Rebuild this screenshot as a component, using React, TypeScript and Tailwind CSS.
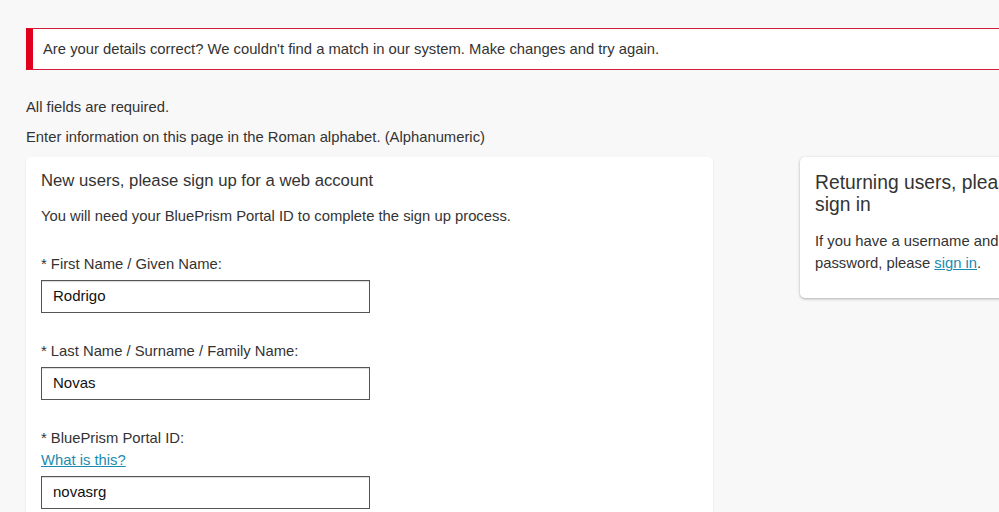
import React from "react";

function Field({ label, value, link }: { label: string; value: string; link?: string }) {
  return (
    <div className="flex flex-col">
      <div className="text-[14.8px] leading-[18px] text-[#333]">{label}</div>
      {link && (
        <a href="#" className="text-[14.8px] leading-[18px] text-[#1b8bb0] underline mt-[4px] self-start">
          {link}
        </a>
      )}
      <div className="mt-[7px] w-[329px] h-[33px] border border-[#555] shadow-[inset_0_1px_1px_rgba(0,0,0,0.15)] bg-white flex items-center pl-[11px] text-[15px] text-[#111]">
        {value}
      </div>
    </div>
  );
}

export default function App() {
  return (
    <div
      className="w-[999px] h-[512px] overflow-hidden bg-[#f8f8f8] text-[#333]"
      style={{ fontFamily: '"Liberation Sans", Arial, sans-serif' }}
    >
      <div className="pl-[26px] pt-[28px] w-[1200px]">
        <div className="w-[1100px] h-[42px] bg-white border-y border-[#d71a3a] border-l-[7px] border-l-[#e0001b] flex items-center pl-[10px] text-[14.8px] text-[#333]">
          Are your details correct? We couldn't find a match in our system. Make changes and try again.
        </div>
        <div className="mt-[28px] text-[14.8px] leading-[18px]">All fields are required.</div>
        <div className="mt-[12px] text-[14.8px] leading-[18px]">
          Enter information on this page in the Roman alphabet. (Alphanumeric)
        </div>
        <div className="mt-[11px] flex items-start gap-[87px]">
          <div className="w-[687px] h-[400px] bg-white rounded-[5px] shadow-[0_1px_2px_rgba(0,0,0,0.12)] pl-[15px] pt-[14px]">
            <div className="text-[16.7px] leading-[20px] text-[#333]">New users, please sign up for a web account</div>
            <div className="mt-[16px] text-[14.8px] leading-[18px]">
              You will need your BluePrism Portal ID to complete the sign up process.
            </div>
            <div className="mt-[30px] flex flex-col gap-[29px]">
              <Field label="* First Name / Given Name:" value="Rodrigo" />
              <Field label="* Last Name / Surname / Family Name:" value="Novas" />
              <Field label="* BluePrism Portal ID:" value="novasrg" link="What is this?" />
            </div>
          </div>
          <div className="w-[300px] bg-white rounded-[5px] shadow-[0_1px_3px_rgba(0,0,0,0.3)] pl-[15px] pt-[15px] pb-[24px]">
            <div className="text-[19.3px] leading-[22px] text-[#333] whitespace-nowrap">
              Returning users, please
              <br />
              sign in
            </div>
            <div className="mt-[14px] text-[14.8px] leading-[22px] whitespace-nowrap">
              If you have a username and
              <br />
              password, please{" "}
              <a href="#" className="text-[#1b8bb0] underline">
                sign in
              </a>
              .
            </div>
          </div>
        </div>
      </div>
    </div>
  );
}
